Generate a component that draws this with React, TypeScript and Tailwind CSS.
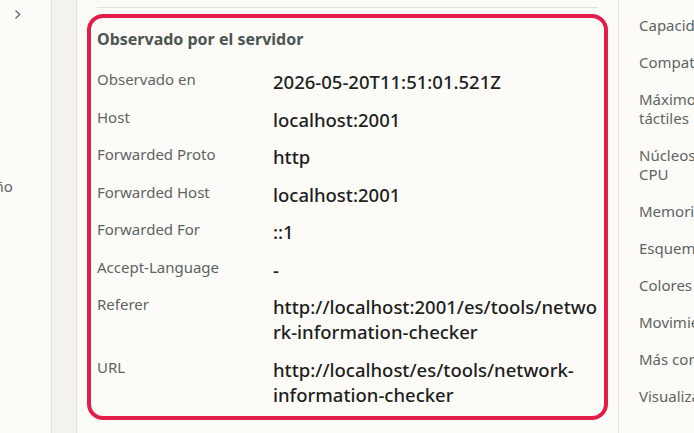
import React from "react";

const font = "font-['Noto_Sans',sans-serif]";

const rows: { label: string; value: string }[] = [
  { label: "Observado en", value: "2026-05-20T11:51:01.521Z" },
  { label: "Host", value: "localhost:2001" },
  { label: "Forwarded Proto", value: "http" },
  { label: "Forwarded Host", value: "localhost:2001" },
  { label: "Forwarded For", value: "::1" },
  { label: "Accept-Language", value: "-" },
  { label: "Referer", value: "http://localhost:2001/es/tools/network-information-checker" },
  { label: "URL", value: "http://localhost/es/tools/network-information-checker" },
];

const sideItems: string[][] = [
  ["Capacidad de red"],
  ["Compatibilidad"],
  ["Máximo de puntos", "táctiles"],
  ["Núcleos de", "CPU"],
  ["Memoria del dispositivo"],
  ["Esquema de color"],
  ["Colores forzados"],
  ["Movimiento reducido"],
  ["Más contraste"],
  ["Visualización"],
];

const App = () => {
  return (
    <div className={`${font} flex h-[433px] w-[694px] overflow-hidden bg-[#fcfbf8]`}>
      {/* left nav */}
      <aside className="w-[52px] shrink-0 overflow-hidden border-r border-[#e3e1db]">
        <div className="pl-[15px] pt-[10px]">
          <svg width="6" height="9" viewBox="0 0 6 9" fill="none">
            <path d="M1 1l3.8 3.5L1 8" stroke="#6b7370" strokeWidth="1.5" strokeLinecap="round" strokeLinejoin="round" />
          </svg>
        </div>
        <div className="-ml-[36px] mt-[157px] whitespace-nowrap text-[15px] leading-5 text-[#5d6562]">Diseño</div>
      </aside>

      <div className="w-[25px] shrink-0 border-r border-[#e3e1db] bg-[#f3f2ee]" />

      {/* main */}
      <main className="w-[541px] shrink-0 px-[10px]">
        <div className="mx-[10px] mt-[7px] h-px bg-[#e3e1db]" />
        <section className="mt-[6px] rounded-[16px] border-4 border-[#e31d4a] pb-[9px] pl-[6px] pr-[4px] pt-[9px]">
          <h2 className="text-[16px] font-bold leading-6 text-[#4b5552]">Observado por el servidor</h2>
          <dl className="mt-[18px] grid grid-cols-[160px_minmax(0,1fr)] gap-x-4 gap-y-[12.5px]">
            {rows.map((r) => (
              <React.Fragment key={r.label}>
                <dt className="text-[15px] leading-5 text-[#5d6562]">{r.label}</dt>
                <dd className="break-words text-[18.5px] font-medium leading-[25px] text-[#1c1f1e]">{r.value}</dd>
              </React.Fragment>
            ))}
          </dl>
        </section>
      </main>

      {/* right panel */}
      <aside className="flex-1 border-l border-[#e3e1db] pl-5 pt-[16px]">
        <ul className="flex flex-col gap-[18px]">
          {sideItems.map((lines) => (
            <li key={lines[0]} className="text-[15px] leading-[19px] text-[#5d6562]">
              {lines.map((l) => (
                <div key={l} className="whitespace-nowrap">{l}</div>
              ))}
            </li>
          ))}
        </ul>
      </aside>
    </div>
  );
};

export default App;
